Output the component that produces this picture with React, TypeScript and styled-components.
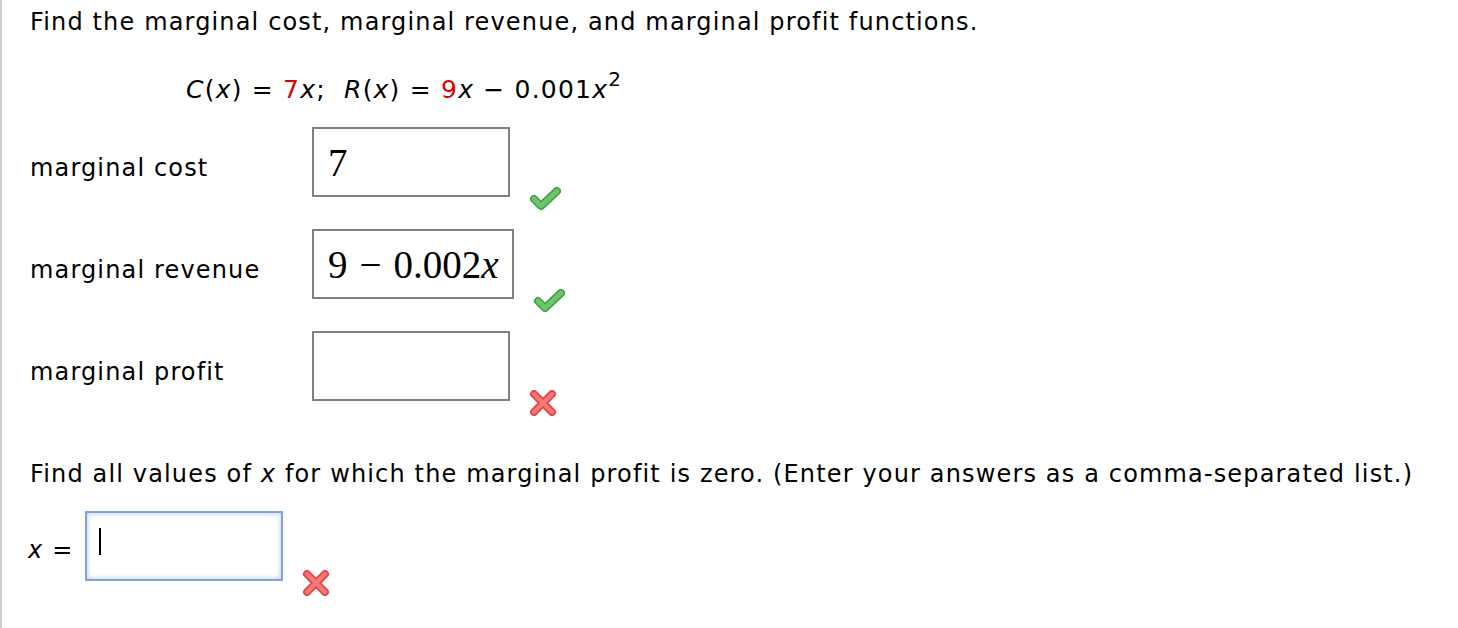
import React from "react"
import styled, { createGlobalStyle } from "styled-components"

const GlobalStyle = createGlobalStyle`
  html, body {
    margin: 0;
    padding: 0;
    background: #ffffff;
  }
  body {
    font-family: "DejaVu Sans", Verdana, sans-serif;
    color: #000000;
  }
`

const Page = styled.div`
  min-height: 628px;
  box-sizing: border-box;
  border-left: 2px solid #cfcfcf;
  padding: 8px 0 0 28px;
`

const Prompt = styled.p`
  margin: 0;
  font-size: 24px;
  letter-spacing: 1.15px;
  line-height: 28px;
  white-space: nowrap;
`

const Equation = styled.div`
  margin: 40px 0 0 156px;
  font-size: 25px;
  letter-spacing: 1.2px;
  line-height: 28px;
  white-space: nowrap;
`

const Var = styled.i`
  font-style: italic;
`

const Given = styled.span`
  color: #e00000;
`

const Sup = styled.sup`
  font-size: 20px;
  line-height: 0;
  position: relative;
  top: -3px;
`

const AnswerList = styled.div`
  display: flex;
  flex-direction: column;
  gap: 32px;
  margin-top: 23px;
`

const AnswerRow = styled.div`
  display: grid;
  grid-template-columns: 282px max-content max-content;
  justify-content: start;
  align-items: center;
`

const Label = styled.span`
  font-size: 24px;
  letter-spacing: 1.15px;
  line-height: 28px;
  padding-top: 11px;
`

const MathBox = styled.div<{ $focused?: boolean }>`
  box-sizing: border-box;
  min-width: 198px;
  height: 70px;
  display: flex;
  align-items: center;
  padding: 0 13px 0 14px;
  font-family: "Liberation Serif", "Times New Roman", serif;
  font-size: 39px;
  border: 2px solid ${({ $focused }) => ($focused ? "#7ea4d2" : "#808080")};
  box-shadow: ${({ $focused }) =>
    $focused ? "inset 0 0 4px 1px rgba(126, 164, 210, 0.45)" : "none"};
  background: #ffffff;
`

const MathVar = styled.span`
  font-style: italic;
`

const Minus = styled.span`
  margin: 0 12px;
`

const Mark = styled.span`
  align-self: end;
  margin: 0 0 -15px 19px;
  width: 32px;
  height: 26px;
  display: flex;
`

const Caret = styled.span`
  width: 2px;
  height: 27px;
  background: #000000;
  margin: 0 0 10px -2px;
`

const Section = styled.div`
  margin-top: 59px;
`

const XRow = styled.div`
  display: flex;
  align-items: center;
  margin-top: 23px;
`

const XLabel = styled.span`
  font-size: 24px;
  line-height: 28px;
  letter-spacing: 1.15px;
  margin: 8px 12px 0 -2px;
`

const Check = () => (
  <svg width="32" height="26" viewBox="0 0 32 26">
    <path
      d="M5 13 L12 20 L28 5"
      fill="none"
      stroke="#3f9f45"
      strokeWidth="8"
      strokeLinecap="round"
      strokeLinejoin="round"
    />
    <path
      d="M5 13 L12 20 L28 5"
      fill="none"
      stroke="#6cc46c"
      strokeWidth="5"
      strokeLinecap="round"
      strokeLinejoin="round"
    />
  </svg>
)

const Cross = () => (
  <svg width="28" height="26" viewBox="0 0 28 26">
    <path
      d="M5 4 L23 22 M23 4 L5 22"
      fill="none"
      stroke="#e64848"
      strokeWidth="8"
      strokeLinecap="round"
    />
    <path
      d="M5 4 L23 22 M23 4 L5 22"
      fill="none"
      stroke="#f47a7a"
      strokeWidth="4"
      strokeLinecap="round"
    />
  </svg>
)

export default function App() {
  return (
    <>
      <GlobalStyle />
      <Page>
        <Prompt>
          Find the marginal cost, marginal revenue, and marginal profit functions.
        </Prompt>
        <Equation>
          <Var>C</Var>(<Var>x</Var>) = <Given>7</Given>
          <Var>x</Var>;&nbsp; <Var>R</Var>(<Var>x</Var>) = <Given>9</Given>
          <Var>x</Var> − 0.001<Var>x</Var>
          <Sup>2</Sup>
        </Equation>

        <AnswerList>
          <AnswerRow>
            <Label>marginal cost</Label>
            <MathBox>7</MathBox>
            <Mark>
              <Check />
            </Mark>
          </AnswerRow>
          <AnswerRow>
            <Label>marginal revenue</Label>
            <MathBox>
              9<Minus>−</Minus>0.002<MathVar>x</MathVar>
            </MathBox>
            <Mark>
              <Check />
            </Mark>
          </AnswerRow>
          <AnswerRow>
            <Label>marginal profit</Label>
            <MathBox />
            <Mark>
              <Cross />
            </Mark>
          </AnswerRow>
        </AnswerList>

        <Section>
          <Prompt>
            Find all values of <Var>x</Var> for which the marginal profit is zero. (Enter
            your answers as a comma-separated list.)
          </Prompt>
          <XRow>
            <XLabel>
              <Var>x</Var> =
            </XLabel>
            <MathBox $focused>
              <Caret />
            </MathBox>
            <Mark>
              <Cross />
            </Mark>
          </XRow>
        </Section>
      </Page>
    </>
  )
}
